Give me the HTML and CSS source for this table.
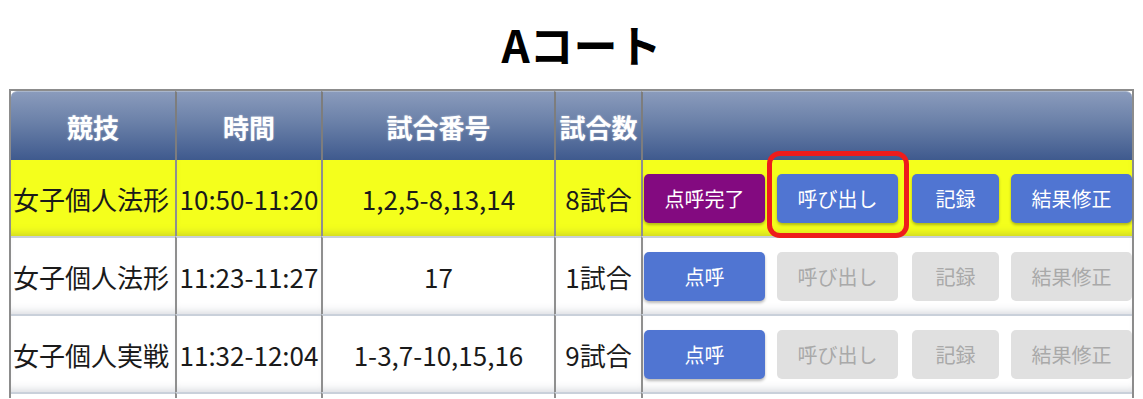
FILE: index.html
```html
<!DOCTYPE html>
<html lang="ja">
<head>
<meta charset="utf-8">
<link rel="stylesheet" href="styles.css">
</head>
<body>
<h1 class="title">Aコート</h1>
<table class="court">
  <colgroup>
    <col class="c1"><col class="c2"><col class="c3"><col class="c4"><col class="c5">
  </colgroup>
  <thead>
    <tr>
      <th class="first">競技</th>
      <th>時間</th>
      <th>試合番号</th>
      <th>試合数</th>
      <th class="last"></th>
    </tr>
  </thead>
  <tbody>
    <tr class="active">
      <td class="left">女子個人法形</td>
      <td>10:50-11:20</td>
      <td>1,2,5-8,13,14</td>
      <td>8試合</td>
      <td class="actions">
        <div class="btns">
          <button class="btn done">点呼完了</button>
          <span class="highlight"><button class="btn blue">呼び出し</button></span>
          <button class="btn blue w-rec">記録</button>
          <button class="btn blue">結果修正</button>
        </div>
      </td>
    </tr>
    <tr>
      <td class="left">女子個人法形</td>
      <td>11:23-11:27</td>
      <td>17</td>
      <td>1試合</td>
      <td class="actions">
        <div class="btns">
          <button class="btn blue">点呼</button>
          <button class="btn off">呼び出し</button>
          <button class="btn off w-rec">記録</button>
          <button class="btn off">結果修正</button>
        </div>
      </td>
    </tr>
    <tr>
      <td class="left">女子個人実戦</td>
      <td>11:32-12:04</td>
      <td>1-3,7-10,15,16</td>
      <td>9試合</td>
      <td class="actions">
        <div class="btns">
          <button class="btn blue">点呼</button>
          <button class="btn off">呼び出し</button>
          <button class="btn off w-rec">記録</button>
          <button class="btn off">結果修正</button>
        </div>
      </td>
    </tr>
    <tr class="spacer">
      <td class="left"></td><td></td><td></td><td></td><td></td>
    </tr>
  </tbody>
</table>
</body>
</html>
```

FILE: styles.css
```css
html, body {
  margin: 0;
  padding: 0;
  background: #ffffff;
}
body {
  font-family: "Noto Sans CJK JP", "Noto Sans", sans-serif;
  color: #1a1a1a;
}
.title {
  margin: 0;
  padding: 15px 0 0 20px;
  height: 89px;
  box-sizing: border-box;
  font-size: 44px;
  line-height: 58px;
  font-weight: 700;
  text-align: center;
  color: #000;
}
.court {
  margin-left: 9px;
  width: 1125px;
  border-collapse: separate;
  border-spacing: 0;
  border: 2px solid #8c8c8c;
  border-bottom: 0;
  table-layout: fixed;
}
.c1 { width: 164px; }
.c2 { width: 146px; }
.c3 { width: 233px; }
.c4 { width: 87px; }
.c5 { width: auto; }

th {
  height: 68px;
  padding: 0;
  font-size: 26px;
  font-weight: 700;
  color: #ffffff;
  text-shadow: 0 0 2px rgba(255,255,255,0.5);
  background: linear-gradient(#8a9bbc, #6a80a8 45%, #3f5a8e);
  border-left: 2px solid #7d7d7d;
  border-top: 1px solid #a9b6cc;
}
th.first { border-left: 0; border-top-left-radius: 6px; }
th.last { border-top-right-radius: 6px; }

td {
  height: 76px;
  padding: 0;
  font-size: 26px;
  text-align: center;
  white-space: nowrap;
  border-left: 2px solid #8f8f8f;
  border-top: 2px solid #c9d0da;
  box-shadow: inset 0 -8px 8px -6px rgba(90,100,120,0.25);
}
tbody tr:first-child td { border-top: 0; }
td.left { border-left: 0; text-align: left; padding-left: 2px; }
tr.active td { background: #f4ff1c; box-shadow: inset 0 -8px 8px -6px rgba(120,120,60,0.35); }
tr.spacer td { height: 4px; box-shadow: none; }

td.actions { text-align: left; padding-left: 1px; }
.btns {
  display: flex;
  align-items: center;
  gap: 12px;
}
.btn {
  height: 49px;
  width: 121px;
  border: 0;
  border-radius: 5px;
  font-family: "Noto Sans CJK JP", sans-serif;
  font-size: 20px;
  color: #ffffff;
  padding: 0;
  box-shadow: 0 2px 3px rgba(0,0,0,0.28);
}
.btn.w-rec { width: 87px; margin-left: 2px; }
.btn.blue { background: #5075d2; }
.btn.done { background: #830a80; }
.btn.off { background: #e0e0e0; color: #a9a9a9; box-shadow: none; }

.highlight {
  position: relative;
  display: inline-flex;
}
.highlight::after {
  content: "";
  position: absolute;
  left: -10px;
  right: -11px;
  top: -23px;
  bottom: -15px;
  border: 5px solid #ee1c1c;
  border-radius: 13px;
  pointer-events: none;
}
```
